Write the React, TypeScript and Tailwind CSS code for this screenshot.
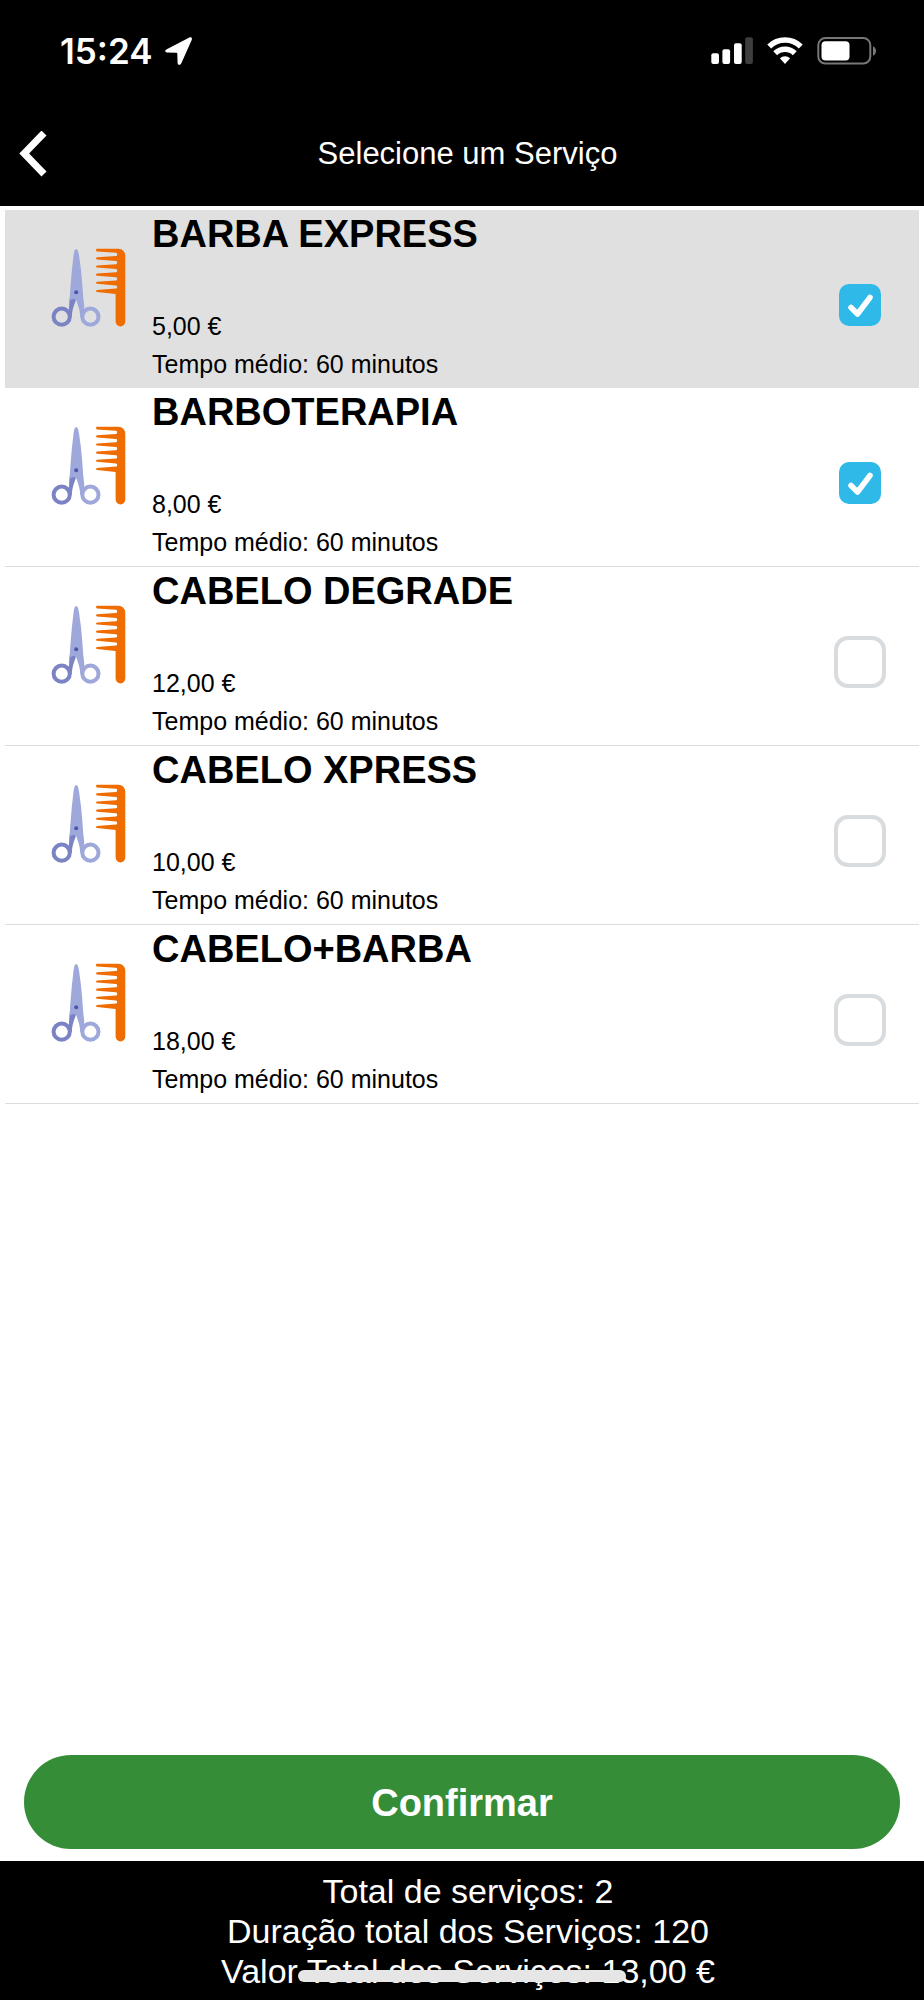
import { useState } from "react";

type Service = { id: string; name: string; price: number; minutes: number };

const services: Service[] = [
  { id: "barba-express", name: "BARBA EXPRESS", price: 5, minutes: 60 },
  { id: "barboterapia", name: "BARBOTERAPIA", price: 8, minutes: 60 },
  { id: "cabelo-degrade", name: "CABELO DEGRADE", price: 12, minutes: 60 },
  { id: "cabelo-xpress", name: "CABELO XPRESS", price: 10, minutes: 60 },
  { id: "cabelo-barba", name: "CABELO+BARBA", price: 18, minutes: 60 },
];

const euros = (value: number) => `${value.toFixed(2).replace(".", ",")} €`;

function StatusBar() {
  return (
    <div className="flex h-[102px] items-center justify-between pr-[47px] pl-[60px]">
      <div className="flex items-center gap-3">
        <span className="font-['Inter',sans-serif] text-[35px] leading-10 font-semibold">15:24</span>
        <svg className="h-7 w-7" viewBox="0 0 28 28" fill="currentColor" aria-hidden="true">
          <path d="M24.400.6 1.300 12.400C-.4 13.400 0 15.400 1.900 15.500l9.600.3c.5 0 .8.3.8.8l.3 9.400c.1 2.200 2.600 2.500 3.600.6L26.700 3C27.600 1.100 26.200-.3 24.400.6Z" />
        </svg>
      </div>
      <div className="flex items-center gap-[14px]">
        <svg className="h-7 w-[43px]" viewBox="0 0 43 28" fill="currentColor" aria-hidden="true">
          <rect x="1.300" y="16.300" width="7.700" height="10.700" rx="2" />
          <rect x="12.400" y="12.300" width="7.700" height="14.700" rx="2" />
          <rect x="24" y="6.300" width="7.700" height="20.700" rx="2" />
          <rect x="35.200" y=".3" width="7.700" height="26.700" rx="2" fill="#3d3d3d" />
        </svg>
        <svg className="h-7 w-9" viewBox="0 0 36 28" aria-hidden="true">
          <g fill="none" stroke="currentColor" strokeWidth="5.500">
            <path d="M2.200 9.500a22.500 22.500 0 0 1 31.600 0" />
            <path d="M8.200 16.200a14 14 0 0 1 19.600 0" />
          </g>
          <path fill="currentColor" d="M12.900 21.300a7.500 7.500 0 0 1 10.200 0L18 27Z" />
        </svg>
        <svg className="h-7 w-[60px]" viewBox="0 0 60 28" aria-hidden="true">
          <rect x="1.300" y="1.100" width="52" height="25.400" rx="7" fill="none" stroke="#777" strokeWidth="2" />
          <rect x="4.500" y="4.200" width="28" height="19.300" rx="4" fill="currentColor" />
          <path d="M56 9.200c4 1.800 4 7.700 0 9.500Z" fill="#777" />
        </svg>
      </div>
    </div>
  );
}

function ScissorsAndComb() {
  return (
    <svg className="h-20 w-[76px]" viewBox="0 0 76 80" aria-hidden="true">
      <path d="M19.500 46 25 52c-1.500 4-3.800 9-4.200 17h-3.600c1-6 .8-12 1.300-17Z" fill="#7c83c4" />
      <path
        d="M25.200 1c1.500 0 2.300 3 2.900 7 1.400 9 2.400 18 3.100 27 .6 8 .8 13 1.600 19 .6 4 .6 9 .2 15h-3.700c-.2-7-2.600-12-4.100-17-1.600-1.500-3.600-1.500-6.600 1 .2-6 .7-12 1.200-18 .7-9 1.500-18 2.700-27 .6-4 1.200-7 2.700-7Z"
        fill="#9fa8da"
      />
      <circle cx="25.200" cy="44.300" r="2" fill="#4a55a8" />
      <circle cx="10.700" cy="68.700" r="8.100" fill="none" stroke="#7c83c4" strokeWidth="4" />
      <circle cx="39.400" cy="68.700" r="8.100" fill="none" stroke="#9fa8da" strokeWidth="4" />
      <path
        d="M46 .8h21.500a6.800 6.800 0 0 1 6.800 6.800v66a4.800 4.800 0 0 1-9.700 0V46L46 44c-1.300-.2-1.300-1.900 0-2.100L65 40.600c1.600-.2 1.600-3 0-3.200L46 35.800c-1.300-.2-1.300-1.900 0-2.100L65 32.500c1.600-.2 1.600-3 0-3.200L46 27.700c-1.300-.2-1.300-1.900 0-2.100L65 24.300c1.600-.2 1.600-3 0-3.200L46 19.600c-1.300-.2-1.300-1.900 0-2.100L65 16.200c1.600-.2 1.600-3 0-3.200L46 11.400c-1.300-.2-1.300-1.900 0-2.100L65 8c1.600-.2 1.600-3 0-3.200L46 3.400C44.700 3.100 44.700.8 46 .8Z"
        fill="#ef6c00"
      />
    </svg>
  );
}

function ServiceRow({ service, checked, highlighted, onToggle }: {
  service: Service;
  checked: boolean;
  highlighted: boolean;
  onToggle: () => void;
}) {
  return (
    <li className={highlighted ? "bg-[#e0e0e0]" : "border-b border-[#dcdcdc]"}>
      <label htmlFor={service.id} className="flex h-[178px] cursor-pointer pr-8 pl-[46px]">
        <span className="pt-[38px]">
          <ScissorsAndComb />
        </span>
        <span className="flex flex-1 flex-col pl-[25px]">
          <span className="text-[38px] leading-[48px] font-bold">{service.name}</span>
          <span className="mt-[49px] text-[25px] leading-[38px]">{euros(service.price)}</span>
          <span className="text-[25px] leading-[38px]">Tempo médio: {service.minutes} minutos</span>
        </span>
        <span className="grid w-[54px] place-items-center self-center pt-3">
          <input
            id={service.id}
            type="checkbox"
            checked={checked}
            onChange={onToggle}
            className="peer col-start-1 row-start-1 h-[52px] w-[52px] appearance-none rounded-[14px] border-4 border-[#d9dcde] bg-white checked:h-[42px] checked:w-[42px] checked:rounded-[10px] checked:border-0 checked:bg-[#2fb9e9]"
          />
          <svg
            className="pointer-events-none invisible col-start-1 row-start-1 h-[42px] w-[54px] peer-checked:visible"
            viewBox="0 0 54 42"
            fill="none"
            stroke="white"
            strokeWidth="5.500"
            strokeLinecap="round"
            strokeLinejoin="round"
            aria-hidden="true"
          >
            <path d="m18 23.500 6.500 6.500L37 13.500" />
          </svg>
        </span>
      </label>
    </li>
  );
}

export default function App() {
  const [selected, setSelected] = useState<string[]>(["barba-express", "barboterapia"]);
  const chosen = services.filter((s) => selected.includes(s.id));
  const minutes = chosen.reduce((sum, s) => sum + s.minutes, 0);
  const total = chosen.reduce((sum, s) => sum + s.price, 0);

  const toggle = (id: string) =>
    setSelected((ids) => (ids.includes(id) ? ids.filter((x) => x !== id) : [...ids, id]));

  return (
    <div className="flex min-h-screen flex-col bg-white font-['Liberation_Sans',Arial,sans-serif] text-black">
      <header className="bg-black text-white">
        <StatusBar />
        <div className="flex h-[104px] items-center pr-[7px] pl-[18px]">
          <button type="button" aria-label="Voltar" className="flex h-14 w-10 items-center">
            <svg className="h-[46px] w-[30px]" viewBox="0 0 30 46" fill="none" stroke="currentColor" strokeWidth="7" aria-hidden="true">
              <path d="M26 2 6.200 22.500 26 43" />
            </svg>
          </button>
          <h1 className="flex-1 pr-10 text-center text-[31px] leading-10">Selecione um Serviço</h1>
        </div>
      </header>

      <main className="flex flex-1 flex-col">
        <ul className="mx-[5px] mt-1">
          {services.map((service, index) => (
            <ServiceRow
              key={service.id}
              service={service}
              checked={selected.includes(service.id)}
              highlighted={index === 0}
              onToggle={() => toggle(service.id)}
            />
          ))}
        </ul>
        <div className="mt-auto px-6 pb-3">
          <button type="button" className="h-[94px] w-full rounded-full bg-[#358d38] pt-0.5 text-[38px] font-bold text-white">
            Confirmar
          </button>
        </div>
      </main>

      <footer className="relative bg-black pt-[10px] pb-[9px] pl-3 text-center text-[34px] leading-10 text-white">
        <p>Total de serviços: {chosen.length}</p>
        <p>Duração total dos Serviços: {minutes}</p>
        <p>Valor Total dos Serviços: {euros(total)}</p>
        <div className="absolute bottom-[18px] left-1/2 h-3 w-[328px] -translate-x-1/2 rounded-full bg-[#e6e6e6]" />
      </footer>
    </div>
  );
}
